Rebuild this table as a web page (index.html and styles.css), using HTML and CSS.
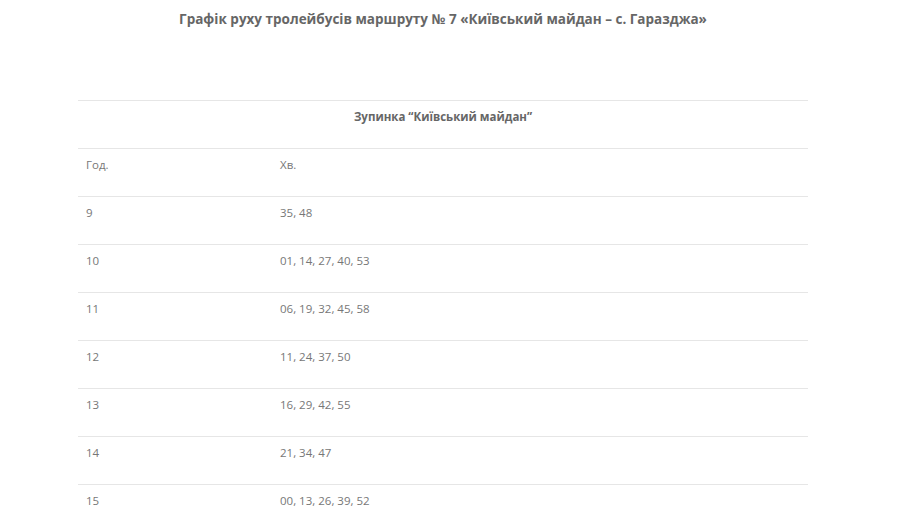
FILE: index.html
```html
<!DOCTYPE html>
<html lang="uk">
<head>
<meta charset="utf-8">
<link rel="stylesheet" href="styles.css">
</head>
<body>
<div class="page">
  <h3 class="title">Графік руху тролейбусів маршруту № 7 «Київський майдан – с. Гаразджа»</h3>
  <table class="schedule">
    <tr><th colspan="2">Зупинка “Київський майдан”</th></tr>
    <tr><td class="hour">Год.</td><td>Хв.</td></tr>
    <tr><td class="hour">9</td><td>35, 48</td></tr>
    <tr><td class="hour">10</td><td>01, 14, 27, 40, 53</td></tr>
    <tr><td class="hour">11</td><td>06, 19, 32, 45, 58</td></tr>
    <tr><td class="hour">12</td><td>11, 24, 37, 50</td></tr>
    <tr><td class="hour">13</td><td>16, 29, 42, 55</td></tr>
    <tr><td class="hour">14</td><td>21, 34, 47</td></tr>
    <tr><td class="hour">15</td><td>00, 13, 26, 39, 52</td></tr>
  </table>
</div>
</body>
</html>
```
FILE: styles.css
```css
html, body {
  margin: 0;
  padding: 0;
  background: #fff;
}
body {
  font-family: "Open Sans", "Liberation Sans", sans-serif;
  color: #777;
}
.page {
  width: 730px;
  margin: 0 0 0 78px;
  padding-top: 9px;
}
.title {
  margin: 0 0 71px;
  font-size: 13.5px;
  line-height: 20px;
  font-weight: 700;
  color: #666;
  text-align: center;
}
.schedule {
  width: 730px;
  border-collapse: collapse;
  font-size: 11.5px;
}
.schedule th,
.schedule td {
  border-top: 1px solid #e6e6e6;
  padding: 6px 8px 21px;
  line-height: 20px;
  text-align: left;
  vertical-align: top;
}
.schedule th {
  text-align: center;
  font-weight: 700;
  color: #666;
}
.schedule td.hour {
  width: 178px;
}
```
